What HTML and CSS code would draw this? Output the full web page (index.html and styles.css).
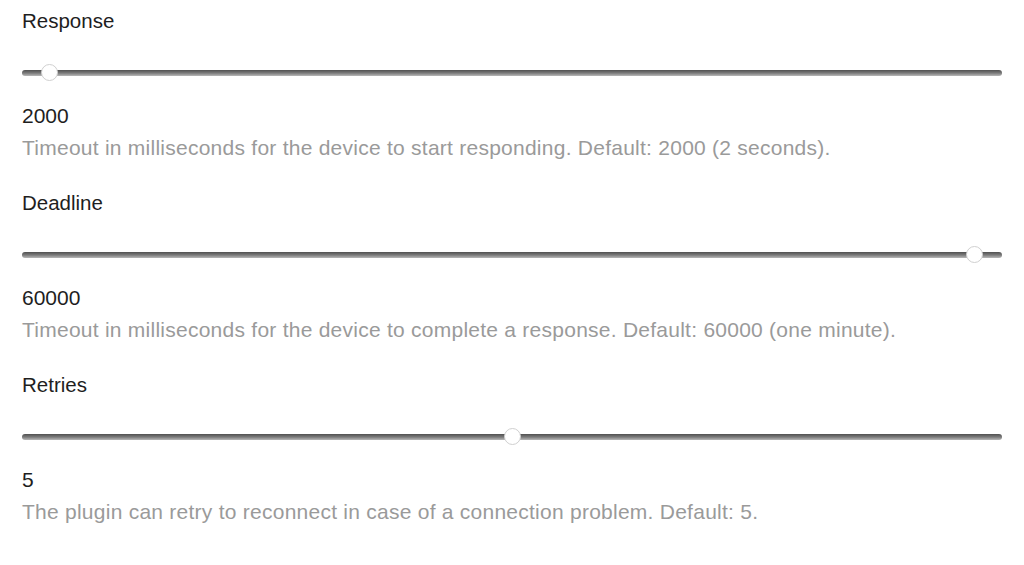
FILE: index.html
```html
<!DOCTYPE html>
<html>
<head>
<meta charset="utf-8">
<link rel="stylesheet" href="styles.css">
</head>
<body>
<main class="settings">
  <section class="field">
    <label class="field-label" for="response">Response</label>
    <input class="slider" id="response" type="range" min="0" max="100000" value="2000">
    <div class="field-value">2000</div>
    <p class="field-help">Timeout in milliseconds for the device to start responding. Default: 2000 (2 seconds).</p>
  </section>
  <section class="field">
    <label class="field-label" for="deadline">Deadline</label>
    <input class="slider" id="deadline" type="range" min="0" max="61200" value="60000">
    <div class="field-value">60000</div>
    <p class="field-help">Timeout in milliseconds for the device to complete a response. Default: 60000 (one minute).</p>
  </section>
  <section class="field">
    <label class="field-label" for="retries">Retries</label>
    <input class="slider" id="retries" type="range" min="0" max="10" value="5">
    <div class="field-value">5</div>
    <p class="field-help">The plugin can retry to reconnect in case of a connection problem. Default: 5.</p>
  </section>
</main>
</body>
</html>
```
FILE: styles.css
```css
html, body {
  margin: 0;
  padding: 0;
  background: #ffffff;
}
body {
  font-family: "Liberation Sans", Arial, Helvetica, sans-serif;
  color: #1e1e1e;
}
.settings {
  display: flex;
  flex-direction: column;
  padding: 9px 22px 0 22px;
  gap: 31px;
}
.field {
  display: flex;
  flex-direction: column;
}
.field-label {
  font-size: 20.5px;
  line-height: 24px;
  display: block;
}
.field-value {
  font-size: 21px;
  line-height: 24px;
  margin-top: 23px;
}
.field-help {
  margin: 8px 0 0 0;
  font-size: 21px;
  line-height: 24px;
  letter-spacing: 0.25px;
  color: #9a9a9a;
}
.slider {
  -webkit-appearance: none;
  appearance: none;
  display: block;
  width: 100%;
  margin: 32px 0 0 0;
  height: 16px;
  background: transparent;
  padding: 0;
}
.slider::-webkit-slider-runnable-track {
  height: 6px;
  border-radius: 3px;
  background: linear-gradient(#505050, #7a7a7a 50%, #b8b8b8);
}
.slider::-webkit-slider-thumb {
  -webkit-appearance: none;
  appearance: none;
  width: 17px;
  height: 17px;
  margin-top: -6px;
  border-radius: 50%;
  background: #ffffff;
  border: 1px solid #d0d0d0;
  box-sizing: border-box;
}
```
